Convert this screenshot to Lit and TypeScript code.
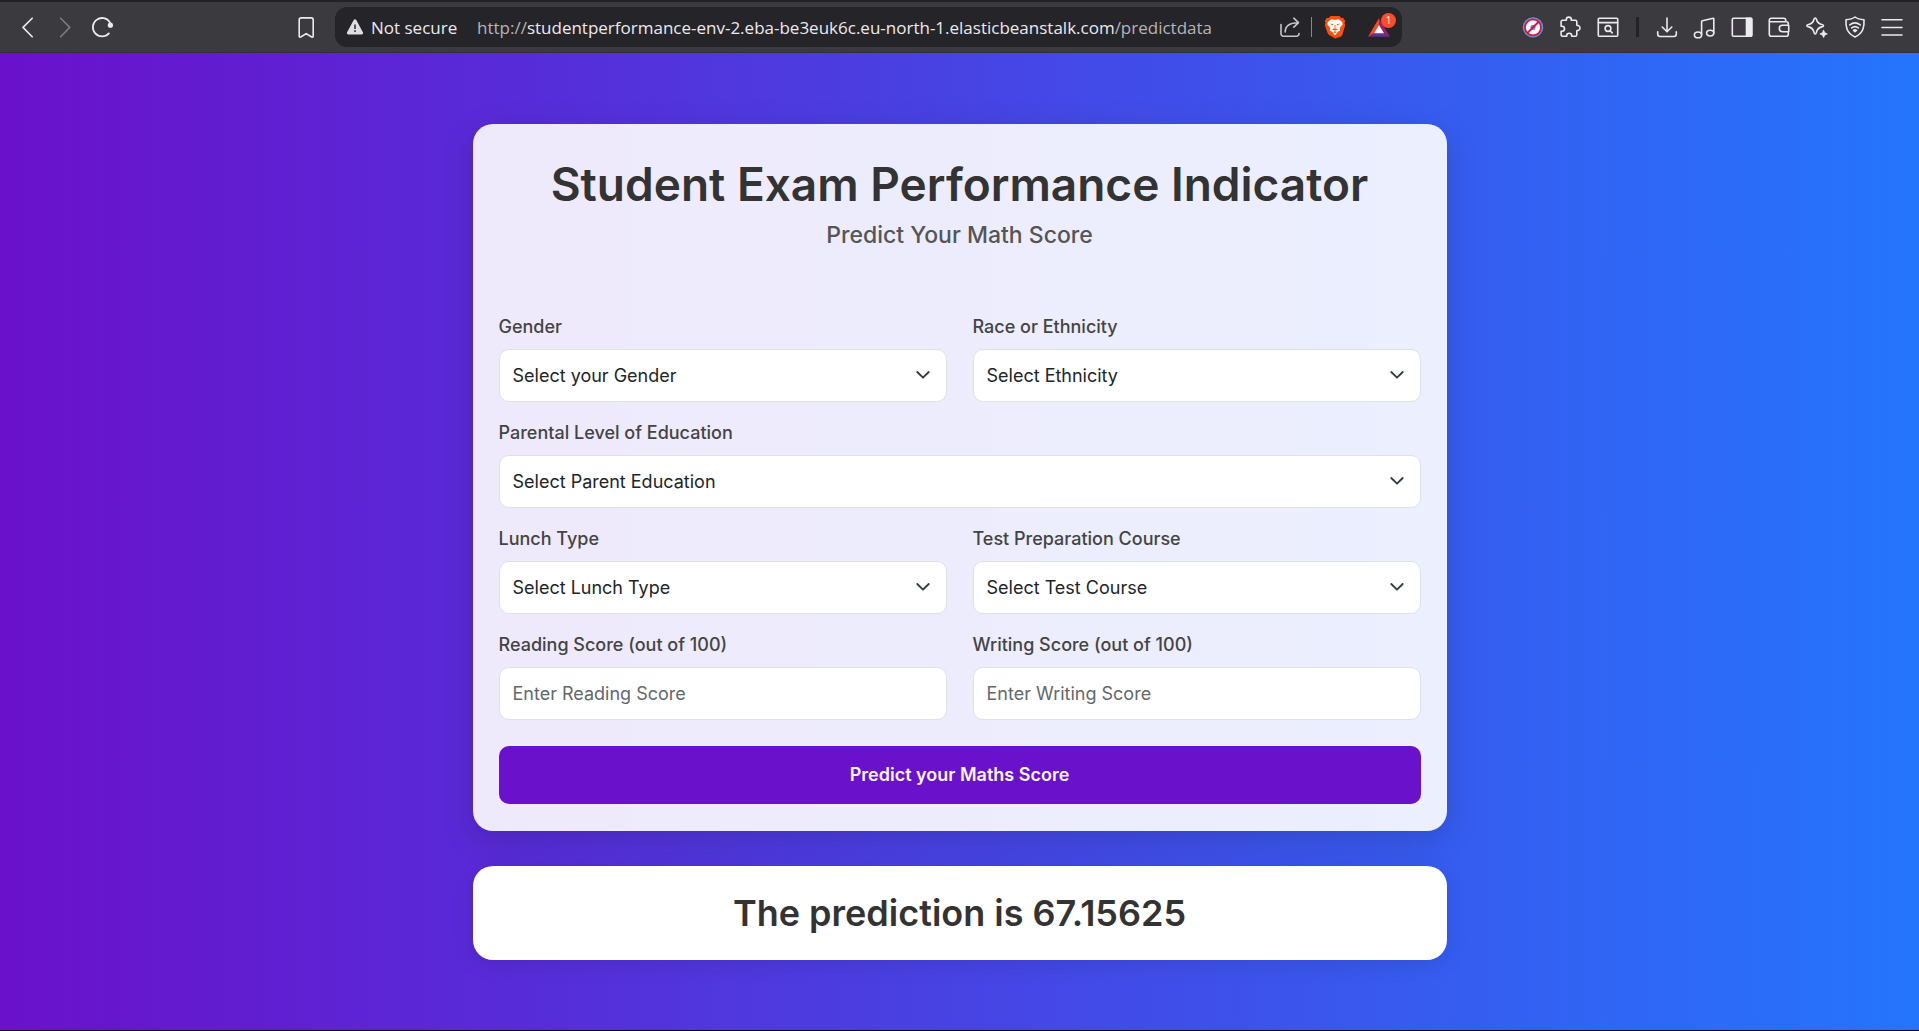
import { LitElement, html, css, svg, nothing, type TemplateResult } from "lit";
import { customElement, property } from "lit/decorators.js";

const line = (body: TemplateResult) => html`<svg
  width="24"
  height="24"
  viewBox="0 0 24 24"
  fill="none"
  stroke="currentColor"
  stroke-width="1.6"
  stroke-linecap="round"
  stroke-linejoin="round"
  aria-hidden="true"
>${body}</svg>`;

const icons = {
  back: line(svg`<path d="M17.2 3.2 8 12.4l9.2 9.4" />`),
  forward: line(svg`<path d="M7.6 3.2 16.8 12.4 7.6 21.8" />`),
  reload: line(svg`<path d="M18.9 7.4A9.2 9.2 0 1 0 17.9 18.4" stroke-width="1.8" /><circle cx="19.4" cy="10.2" r="2.6" fill="currentColor" stroke="none" />`),
  bookmark: line(svg`<path d="M7 2.9h10.2a2 2 0 0 1 2 2v16.4c0 .8-.9 1.2-1.5.7L12.2 18.6l-5.5 3.4c-.6.5-1.5.1-1.5-.7V4.9a2 2 0 0 1 2-2Z" />`),
  share: line(svg`<path d="M3 9.500v9.300a2.400 2.400 0 0 0 2.400 2.400H18.600a2.400 2.400 0 0 0 2.400-2.400V18.500M7.200 17C7.200 11.500 10.500 7.700 20.300 7.700M15.800 3.200l4.700 4.500-4.700 4.500" />`),
  puzzle: line(svg`<path d="M4.300 5.200h4V4.600a2.500 2.500 0 0 1 5 0v.6h4a1.500 1.500 0 0 1 1.500 1.500v3.600l1.400.3a2.500 2.500 0 0 1 0 4.800l-1.400.3v4.100a1.500 1.500 0 0 1-1.500 1.500h-3.600v-.6a2.500 2.500 0 0 0-5 0v.6H4.800a1.700 1.700 0 0 1-1.700-1.700v-3.400h.9a2.500 2.500 0 0 0 0-5h-.9V6.600a1.400 1.400 0 0 1 1.200-1.400Z" />`),
  pageSearch: line(svg`<rect x="2.300" y="3.300" width="19.400" height="18" rx="1" /><path d="M2.300 7.600h19.400" /><circle cx="12" cy="13.500" r="2.900" /><path d="m14.200 15.700 2 2.200" />`),
  download: line(svg`<path d="M12 3v13.500M7.200 12l4.800 4.800 4.800-4.800M2.700 16.800v2.300a2.400 2.400 0 0 0 2.400 2.400h13.800a2.400 2.400 0 0 0 2.400-2.400v-2.300" />`),
  music: line(svg`<path d="M9.600 19.500V6.700a1 1 0 0 1 .8-1l10.800-2.500a.5.5 0 0 1 .6.5V18" /><ellipse cx="6" cy="19.900" rx="3.600" ry="2.900" /><ellipse cx="18.200" cy="18.100" rx="3.600" ry="2.900" />`),
  sidebar: line(svg`<rect x="2.300" y="3.300" width="19.400" height="18" rx="1.200" /><path d="M16.500 3.300h4.500a.7.7 0 0 1 .7.700v16.600a.7.7 0 0 1-.7.700h-4.500Z" fill="currentColor" />`),
  wallet: line(svg`<path d="M2.300 6.700h17a2 2 0 0 1 2 2v1.600M18.700 6.700V5.300a2 2 0 0 0-2-2H4.300a2 2 0 0 0-2 2v14a2 2 0 0 0 2 2h15a2 2 0 0 0 2-2v-2.600M21.700 10.300h-6.200a3.200 3.200 0 0 0 0 6.400h6.200Z" />`),
  sparkle: line(svg`<path d="M10.200 3c.8 0 1 .6 1.200 1.300.8 3.300 1.900 4.400 5.200 5.200.8.200 1.900.4 1.900 1.200s-1.100 1-1.900 1.200c-3.300.8-4.400 2.200-5.200 5.500-.2.800-.4 1.600-1.200 1.600s-1-.8-1.200-1.600c-.8-3.300-1.900-4.700-5.200-5.500-.8-.2-2-.4-2-1.200s1.200-1 2-1.200c3.300-.8 4.400-1.900 5.200-5.200.2-.7.400-1.300 1.200-1.300Z" /><path d="M18.600 15.300l1.200 2.500 2.500 1.100-2.500 1.100-1.200 2.500-1.200-2.500-2.500-1.100 2.500-1.100Z" fill="currentColor" stroke-width=".8" />`),
  shield: line(svg`<path d="M12 2c2.500 2 5.500 2.500 9 2.700.4 7-.5 13.500-9 17.300C3.500 18.200 2.600 11.700 3 4.700 6.500 4.500 9.500 4 12 2Z" /><path d="M6.800 9.900c3.200-2.500 7.200-2.500 10.400 0M8.700 12.900c2-1.600 4.600-1.600 6.600 0" /><path d="M10.500 15.400c.9-.7 2.100-.7 3 0L12 16.600Z" fill="currentColor" />`),
  menu: line(svg`<path d="M2 4.800h20M2 12.500h20M2 20h20" />`),
};

const blocker = html`<svg width="24" height="24" viewBox="0 0 24 24" aria-hidden="true">
  <circle cx="12" cy="12.400" r="10.200" fill="#5b9bea" />
  <circle cx="12" cy="12.400" r="8" fill="#fff" stroke="#d8143c" stroke-width="1.800" />
  <circle cx="12" cy="12.400" r="2.600" fill="#5b8fe0" />
  <path d="M6.300 18.100 17.700 6.700" stroke="#d8143c" stroke-width="2" />
</svg>`;

const warning = html`<svg width="18" height="18" viewBox="0 0 18 18" aria-hidden="true">
  <path d="M7.700 2.100a1.500 1.500 0 0 1 2.600 0l6.600 12.100a1.500 1.500 0 0 1-1.300 2.200H2.400a1.500 1.500 0 0 1-1.300-2.200Z" fill="#dedde4" />
  <path d="M8.100 6.500h1.800v4.400H8.100ZM8.100 12.200h1.800v1.800H8.100Z" fill="#47464c" />
</svg>`;

const lion = html`<svg width="24" height="24" viewBox="0 0 24 24" aria-hidden="true">
  <path d="M7.600 1h8.800l1.900 2.100 2-.2 1.900 3-.7 2 .7 2.400-2.700 9c-.4 1.200-1 1.800-2 2.500L12 23.600l-5.500-3.400c-1-.7-1.600-1.300-2-2.500l-2.700-7.400.7-2.400-.7-2 1.900-3 2 .2Z" fill="#fb4f0a" />
  <path d="M12 4.800 8.200 4.200 4.900 7l-.6 2.300 3 3.800-.4 2.300 2.400 1.600L12 20.500l2.700-3.500 2.400-1.600-.4-2.300 3-3.800-.6-2.300-3.300-2.800Z" fill="#fff" />
  <path d="M6.400 8.400l4 .9-.7 1.300ZM17.600 8.400l-4 .9.700 1.300ZM11.500 10h1l-.1 3h-.8ZM9 14.200l3-1 3 1-3 1.500ZM10 17l2-.7 2 .7-2 1Z" fill="#fb4f0a" />
</svg>`;

const triangle = html`<svg width="24" height="24" viewBox="0 0 24 24" aria-hidden="true">
  <path d="M12 3.200 1 21.800l6-3.400 5-8.400Z" fill="#ff4724" />
  <path d="M12 3.200 23 21.800l-6-3.400-5-8.400Z" fill="#9e1f63" />
  <path d="M1 21.800h22l-6-3.900H7Z" fill="#662d91" />
  <path d="M12 10 7 18.300h10Z" fill="#fff" />
</svg>`;

@customElement("browser-bar")
export class BrowserBar extends LitElement {
  static styles = css`
    :host {
      display: block;
      font-family: "Open Sans", "Noto Sans", sans-serif;
      font-size: 17px;
      color: #eceaf0;
    }
    .bar {
      display: grid;
      grid-template-columns: 335px minmax(0, 1fr) 517px;
      align-items: center;
      box-sizing: border-box;
      height: 53px;
      background: #3b3a3f;
      border-top: 2px solid #222126;
      border-bottom: 1px solid #313035;
    }
    button {
      display: grid;
      place-items: center;
      padding: 0;
      border: 0;
      background: none;
      color: inherit;
      font: inherit;
      cursor: pointer;
    }
    svg {
      display: block;
    }
    .left {
      display: flex;
      justify-content: space-between;
      padding: 0 13px 0 8px;
    }
    .nav {
      display: flex;
    }
    .nav button {
      width: 38px;
      height: 36px;
    }
    .nav button:disabled {
      color: #7c7b80;
    }
    .mark {
      width: 32px;
    }
    .address {
      display: flex;
      align-items: center;
      height: 40px;
      border-radius: 12px;
      background: #252429;
    }
    .site {
      display: flex;
      align-items: center;
      gap: 7px;
      width: 130px;
      padding-left: 11px;
      white-space: nowrap;
    }
    .url {
      flex: 1;
      min-width: 0;
      padding-left: 12px;
      overflow: hidden;
      white-space: nowrap;
      color: #eceaf0;
    }
    .dim {
      color: #b5b4ba;
    }
    .share {
      width: 38px;
      color: #c6c5ca;
    }
    .rule {
      width: 1px;
      height: 20px;
      margin: 0 11px 0 2px;
      background: #88878c;
    }
    .rewards {
      position: relative;
      margin: 0 11px 0 20px;
    }
    .badge {
      position: absolute;
      top: -2px;
      right: -5px;
      width: 15px;
      height: 15px;
      border-radius: 50%;
      background: #fc4d27;
      color: #fff;
      font-size: 10px;
      line-height: 15px;
      text-align: center;
    }
    .right {
      display: flex;
      align-items: center;
      justify-content: flex-end;
      gap: 9px;
      padding-right: 8px;
    }
    .tools {
      display: grid;
      grid-auto-flow: column;
      grid-auto-columns: 1fr;
    }
    .extensions {
      width: 113px;
    }
    .features {
      width: 263px;
    }
    .split {
      width: 3px;
      height: 20px;
      background: #232227;
    }
  `;

  private tool(label: string, icon: TemplateResult) {
    return html`<button type="button" aria-label=${label}>${icon}</button>`;
  }

  render() {
    return html`
      <header class="bar">
        <div class="left">
          <nav class="nav">
            ${this.tool("Back", icons.back)}
            <button type="button" aria-label="Forward" disabled>${icons.forward}</button>
            ${this.tool("Reload", icons.reload)}
          </nav>
          <button type="button" class="mark" aria-label="Bookmark">${icons.bookmark}</button>
        </div>
        <div class="address">
          <button type="button" class="site">${warning}<span>Not secure</span></button>
          <div class="url" role="textbox" tabindex="0" aria-label="Address"><span class="dim">http://</span>studentperformance-env-2.eba-be3euk6c.eu-north-1.elasticbeanstalk.com<span class="dim">/predictdata</span></div>
          <button type="button" class="share" aria-label="Share">${icons.share}</button>
          <span class="rule"></span>
          ${this.tool("Shields", lion)}
          <button type="button" class="rewards" aria-label="Rewards">${triangle}<span class="badge">1</span></button>
        </div>
        <div class="right">
          <div class="tools extensions">
            ${this.tool("Blocker", blocker)}
            ${this.tool("Extensions", icons.puzzle)}
            ${this.tool("Search tabs", icons.pageSearch)}
          </div>
          <span class="split"></span>
          <div class="tools features">
            ${this.tool("Downloads", icons.download)}
            ${this.tool("Media", icons.music)}
            ${this.tool("Sidebar", icons.sidebar)}
            ${this.tool("Wallet", icons.wallet)}
            ${this.tool("Assistant", icons.sparkle)}
            ${this.tool("VPN", icons.shield)}
            ${this.tool("Menu", icons.menu)}
          </div>
        </div>
      </header>
    `;
  }
}

@customElement("form-field")
export class FormField extends LitElement {
  @property() label = "";
  @property() name = "";
  @property() hint = "";
  @property({ attribute: false }) options: string[] | null = null;

  static styles = css`
    :host {
      display: block;
      min-width: 0;
    }
    label {
      display: block;
      margin-bottom: 9px;
      color: #444;
      font-size: 18px;
      font-weight: 500;
      line-height: 26px;
    }
    .box {
      display: grid;
      align-items: center;
    }
    select,
    input {
      grid-area: 1 / 1;
      box-sizing: border-box;
      width: 100%;
      height: 53px;
      margin: 0;
      padding: 0 13px;
      border: 1px solid #dee2e6;
      border-radius: 10px;
      background: #fff;
      color: #212529;
      font-family: inherit;
      font-size: 18px;
      appearance: none;
    }
    input::placeholder {
      color: #63686d;
      opacity: 1;
    }
    .chevron {
      grid-area: 1 / 1;
      justify-self: end;
      margin-right: 16px;
      pointer-events: none;
    }
  `;

  render() {
    return html`
      <label for="control">${this.label}</label>
      <div class="box">
        ${this.options
          ? html`<select id="control" name=${this.name}>
                <option value="">${this.hint}</option>
                ${this.options.map((option) => html`<option>${option}</option>`)}
              </select>
              <svg class="chevron" width="16" height="16" viewBox="0 0 16 16" fill="none" stroke="#343a40" stroke-width="1.8" stroke-linecap="round" stroke-linejoin="round" aria-hidden="true"><path d="m2.300 5 5.700 5.700L13.700 5" /></svg>`
          : html`<input id="control" name=${this.name} type="number" min="0" max="100" placeholder=${this.hint} />`}
      </div>
    `;
  }
}

interface Field {
  name: string;
  label: string;
  hint: string;
  options?: string[];
  wide?: boolean;
}

const fields: Field[] = [
  { name: "gender", label: "Gender", hint: "Select your Gender", options: ["Male", "Female"] },
  { name: "ethnicity", label: "Race or Ethnicity", hint: "Select Ethnicity", options: ["Group A", "Group B", "Group C", "Group D", "Group E"] },
  {
    name: "education",
    label: "Parental Level of Education",
    hint: "Select Parent Education",
    options: ["Some high school", "High school", "Some college", "Associate's degree", "Bachelor's degree", "Master's degree"],
    wide: true,
  },
  { name: "lunch", label: "Lunch Type", hint: "Select Lunch Type", options: ["Free/reduced", "Standard"] },
  { name: "course", label: "Test Preparation Course", hint: "Select Test Course", options: ["None", "Completed"] },
  { name: "reading", label: "Reading Score (out of 100)", hint: "Enter Reading Score" },
  { name: "writing", label: "Writing Score (out of 100)", hint: "Enter Writing Score" },
];

@customElement("app-root")
export class AppRoot extends LitElement {
  @property({ type: Number }) prediction = 67.15625;

  static styles = css`
    :host {
      display: flex;
      flex-direction: column;
      box-sizing: border-box;
      min-height: 100vh;
      border-bottom: 1px solid #0b0b0d;
      font-family: Inter, "Open Sans", sans-serif;
      color: #333;
    }
    .page {
      flex: 1;
      display: flex;
      flex-direction: column;
      align-items: center;
      justify-content: center;
      gap: 35px;
      padding: 24px;
      background: linear-gradient(to right, #6a11cb, #2575fc);
    }
    .card,
    .result {
      box-sizing: border-box;
      width: 100%;
      max-width: 974px;
      border-radius: 20px;
    }
    .card {
      padding: 32px 26px 27px;
      background: rgba(255, 255, 255, 0.9);
      box-shadow: 0 9px 33px rgba(0, 0, 0, 0.15);
    }
    .heading {
      margin-bottom: 66px;
      text-align: center;
    }
    h1,
    h2,
    p {
      margin: 0;
    }
    h1 {
      font-size: 46px;
      font-weight: 600;
      line-height: 56px;
    }
    .subtitle {
      margin-top: 10px;
      color: #555;
      font-size: 23px;
      font-weight: 500;
      line-height: 26px;
    }
    form {
      display: grid;
      grid-template-columns: repeat(2, minmax(0, 1fr));
      gap: 18px 26px;
    }
    .wide {
      grid-column: 1 / -1;
    }
    .submit {
      grid-column: 1 / -1;
      height: 58px;
      margin-top: 8px;
      padding: 0 16px;
      border: 0;
      border-radius: 10px;
      background: #6a11cb;
      color: #f9f5fe;
      font-family: inherit;
      font-size: 18px;
      font-weight: 600;
      cursor: pointer;
    }
    .result {
      padding: 25px 26px;
      background: #fff;
      box-shadow: 0 4px 22px rgba(0, 0, 0, 0.1);
      text-align: center;
    }
    h2 {
      font-size: 36px;
      font-weight: 600;
      line-height: 44px;
    }
  `;

  render() {
    return html`
      <browser-bar></browser-bar>
      <main class="page">
        <section class="card">
          <div class="heading">
            <h1>Student Exam Performance Indicator</h1>
            <p class="subtitle">Predict Your Math Score</p>
          </div>
          <form @submit=${(event: Event) => event.preventDefault()}>
            ${fields.map(
              (field) => html`<form-field
                class=${field.wide ? "wide" : nothing}
                .name=${field.name}
                .label=${field.label}
                .hint=${field.hint}
                .options=${field.options ?? null}
              ></form-field>`,
            )}
            <button class="submit" type="submit">Predict your Maths Score</button>
          </form>
        </section>
        <section class="result">
          <h2>The prediction is ${this.prediction}</h2>
        </section>
      </main>
    `;
  }
}
